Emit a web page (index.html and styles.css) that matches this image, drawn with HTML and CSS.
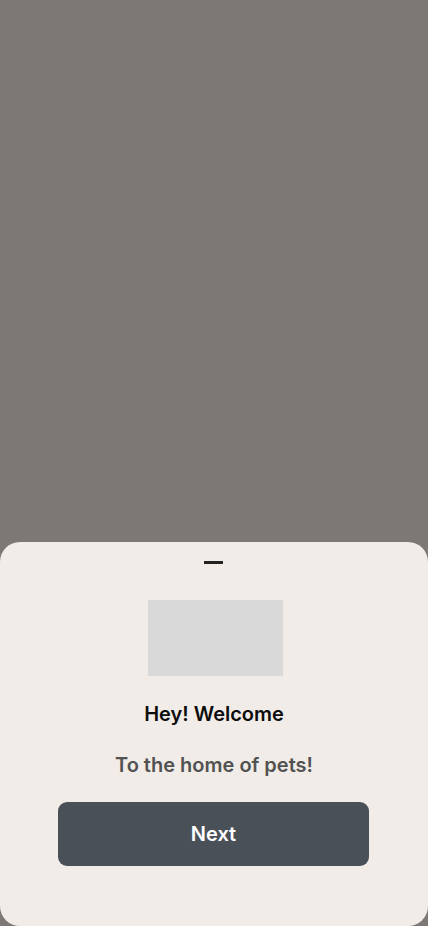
FILE: index.html
```html
<!DOCTYPE html>
<html lang="en">
<head>
<meta charset="utf-8">
<title>Welcome</title>
<link rel="stylesheet" href="styles.css">
</head>
<body>
<div class="screen">
  <div class="backdrop"></div>
  <div class="sheet">
    <div class="handle"></div>
    <div class="image"></div>
    <h1 class="title">Hey! Welcome</h1>
    <p class="subtitle">To the home of pets!</p>
    <button class="next">Next</button>
  </div>
</div>
</body>
</html>
```

FILE: styles.css
```css
html, body {
  margin: 0;
  padding: 0;
  height: 100%;
}
body {
  background: #7d7776;
  font-family: Inter, "Noto Sans", sans-serif;
}
.screen {
  height: 926px;
  display: flex;
  flex-direction: column;
}
.backdrop {
  flex: 1;
}
.sheet {
  background: #f1ece8;
  border-radius: 20px;
  padding: 19px 0 60px;
  display: flex;
  flex-direction: column;
  align-items: center;
}
.handle {
  width: 19px;
  height: 3px;
  background: #222222;
  margin-left: -1px;
}
.image {
  width: 135px;
  height: 76px;
  background: #d9d9d9;
  margin-top: 36px;
  margin-left: 3px;
}
.title {
  margin: 26px 0 0;
  font-size: 20px;
  line-height: 24px;
  font-weight: 600;
  color: #0d0d0d;
}
.subtitle {
  margin: 27px 0 0;
  font-size: 20px;
  line-height: 24px;
  font-weight: 600;
  color: #525252;
}
.next {
  margin-top: 25px;
  margin-right: 1px;
  width: 311px;
  height: 64px;
  border: none;
  border-radius: 9px;
  background: #4a5058;
  color: #ffffff;
  font-family: Inter, "Noto Sans", sans-serif;
  font-size: 20px;
  font-weight: 600;
  cursor: pointer;
}
```
